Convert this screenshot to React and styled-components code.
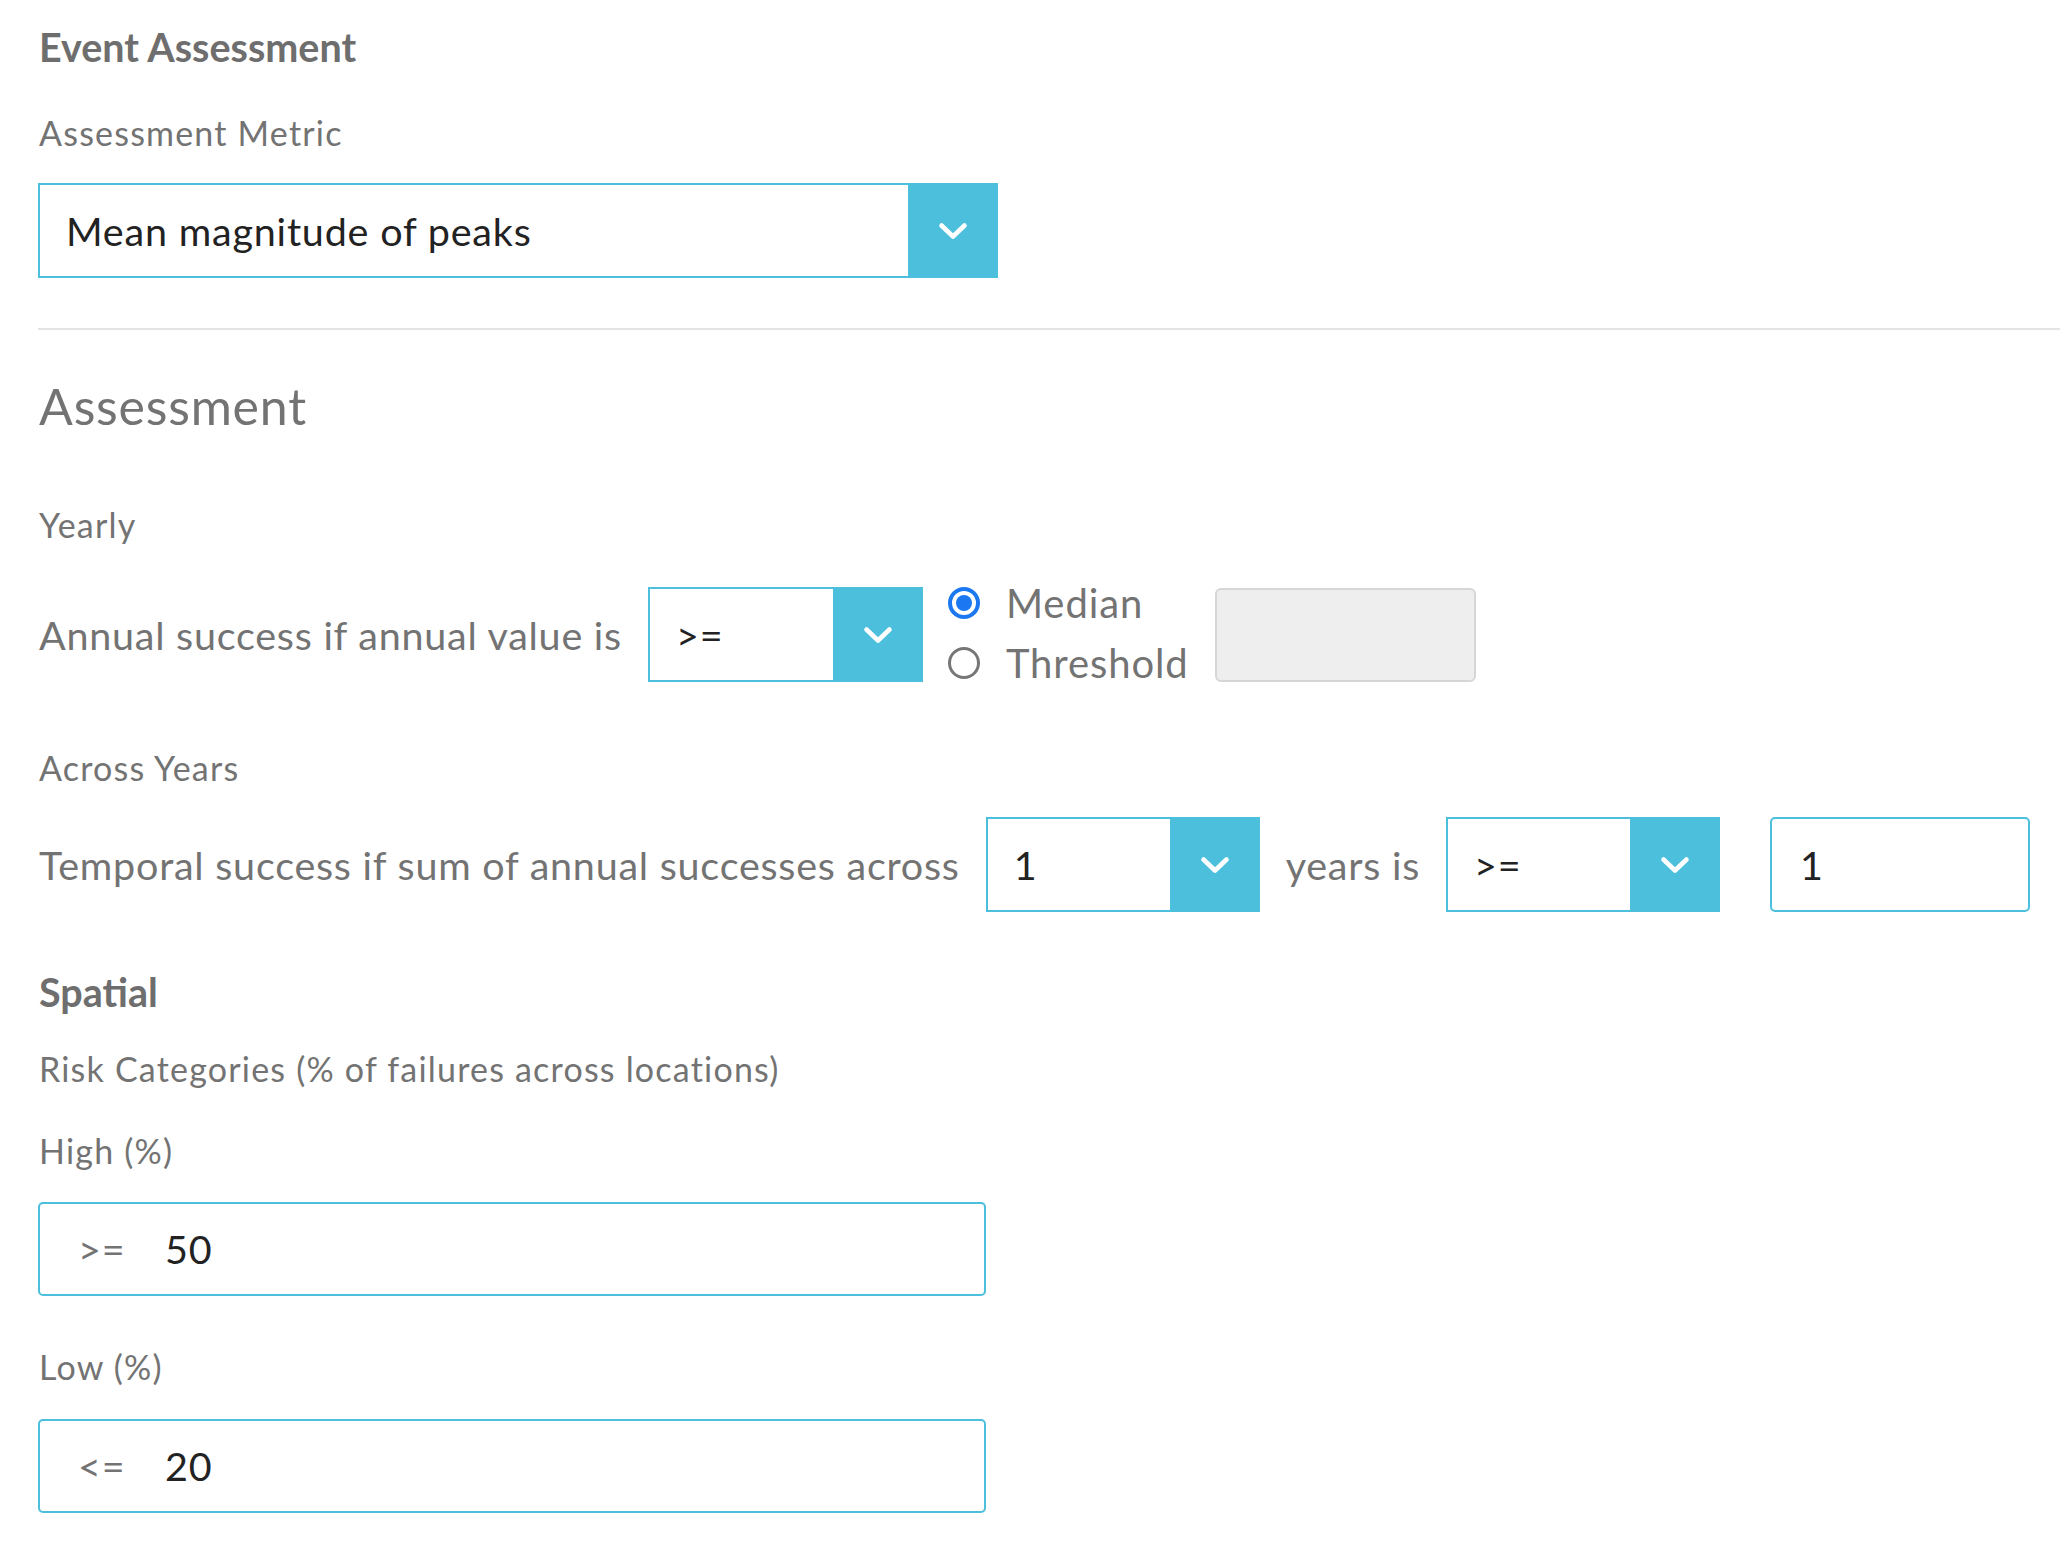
import React from "react";
import styled, { createGlobalStyle } from "styled-components";

const BLUE = "#4cbfdc";
const GRAY = "#737373";
const DARK = "#222222";

const Global = createGlobalStyle`
  html, body { margin: 0; padding: 0; background: #ffffff; }
  body { font-family: Lato, "Open Sans", "Liberation Sans", sans-serif; color: ${GRAY}; }
  * { box-sizing: border-box; }
`;

const Page = styled.div`
  width: 2060px;
  padding: 23px 0 40px 38px;
  display: flex;
  flex-direction: column;
  align-items: flex-start;
`;

const Title = styled.div`
  margin-top: ${(p) => p.$mt || 0}px;
  font-size: 39.5px;
  line-height: 48px;
  font-weight: 700;
  color: #6e6e6e;
  padding-left: 1px;
`;

const Heading = styled.h2`
  margin: 46px 0 0;
  font-size: 50px;
  line-height: 60px;
  font-weight: 400;
  letter-spacing: 0.8px;
  color: ${GRAY};
  padding-left: 1px;
`;

const Label = styled.div`
  margin-top: ${(p) => p.$mt || 0}px;
  font-size: 34px;
  line-height: 41px;
  letter-spacing: 1.2px;
  color: ${GRAY};
  padding-left: 1px;
`;

const Divider = styled.hr`
  align-self: stretch;
  margin: 50px 0 0;
  border: none;
  height: 2px;
  background: #e4e4e4;
`;

const Row = styled.div`
  margin-top: ${(p) => p.$mt || 0}px;
  display: flex;
  align-items: center;
  gap: 26px;
  height: 95px;
`;

const RowText = styled.span`
  font-size: 39.5px;
  line-height: 48px;
  letter-spacing: 0.75px;
  color: ${GRAY};
  white-space: nowrap;
  padding-left: ${(p) => (p.$first ? 1 : 0)}px;
`;

const SelectBox = styled.div`
  margin-top: ${(p) => p.$mt || 0}px;
  width: ${(p) => p.$w}px;
  height: 95px;
  border: 2px solid ${BLUE};
  display: flex;
  align-items: stretch;
  background: #ffffff;
  flex: none;
`;

const SelectValue = styled.div`
  flex: 1;
  display: flex;
  align-items: center;
  padding-left: 26px;
  font-size: 39.5px;
  line-height: 48px;
  letter-spacing: 0.8px;
  color: ${DARK};
  white-space: nowrap;
`;

const SelectButton = styled.div`
  width: 90px;
  margin: -2px -2px -2px 0;
  background: ${BLUE};
  display: flex;
  align-items: center;
  justify-content: center;
`;

const Chevron = () => (
  <svg width="30" height="18" viewBox="0 0 30 18" fill="none">
    <polyline
      points="3.5,3.5 15,14.5 26.5,3.5"
      stroke="#ffffff"
      strokeWidth="4.6"
      strokeLinecap="round"
      strokeLinejoin="round"
    />
  </svg>
);

const Select = ({ value, w, mt }) => (
  <SelectBox $w={w} $mt={mt}>
    <SelectValue>{value}</SelectValue>
    <SelectButton>
      <Chevron />
    </SelectButton>
  </SelectBox>
);

const RadioGroup = styled.div`
  align-self: flex-start;
  display: flex;
  flex-direction: column;
  gap: 28px;
  margin-left: -1px;
`;

const RadioRow = styled.label`
  display: flex;
  align-items: center;
  gap: 26px;
  height: 32px;
  font-size: 40px;
  line-height: 32px;
  letter-spacing: 0.9px;
  color: ${GRAY};
  white-space: nowrap;
`;

const RadioDot = styled.span`
  width: 32px;
  height: 32px;
  border-radius: 50%;
  flex: none;
  background: #ffffff;
  border: ${(p) => (p.$on ? "4px solid #1b78f2" : "3px solid #767676")};
  display: flex;
  align-items: center;
  justify-content: center;
  &::after {
    content: "";
    display: ${(p) => (p.$on ? "block" : "none")};
    width: 16px;
    height: 16px;
    border-radius: 50%;
    background: #1b78f2;
  }
`;

const DisabledBox = styled.div`
  width: 261px;
  height: 94px;
  background: #eeeeee;
  border: 2px solid #d6d6d6;
  border-radius: 6px;
  flex: none;
`;

const ValueInput = styled.div`
  margin-top: ${(p) => p.$mt || 0}px;
  margin-left: ${(p) => p.$ml || 0}px;
  width: ${(p) => p.$w}px;
  height: ${(p) => p.$h || 95}px;
  border: 2px solid ${BLUE};
  border-radius: 5px;
  display: flex;
  align-items: center;
  padding-left: ${(p) => p.$pl || 28}px;
  font-size: 39.5px;
  line-height: 48px;
  letter-spacing: 0.8px;
  color: ${DARK};
  flex: none;
`;

const Prefix = styled.span`
  font-size: 39.5px;
  line-height: 48px;
  letter-spacing: 0.75px;
  color: ${GRAY};
  width: 87px;
  flex: none;
`;

export default function App() {
  return (
    <>
      <Global />
      <Page>
        <Title>Event Assessment</Title>
        <Label $mt={41}>Assessment Metric</Label>
        <Select value="Mean magnitude of peaks" w={960} mt={30} />
        <Divider />
        <Heading>Assessment</Heading>
        <Label $mt={68}>Yearly</Label>
        <Row $mt={42}>
          <RowText $first>Annual success if annual value is</RowText>
          <Select value=">=" w={275} />
          <RadioGroup>
            <RadioRow>
              <RadioDot $on />
              Median
            </RadioRow>
            <RadioRow>
              <RadioDot />
              Threshold
            </RadioRow>
          </RadioGroup>
          <DisabledBox />
        </Row>
        <Label $mt={65}>Across Years</Label>
        <Row $mt={29}>
          <RowText $first>Temporal success if sum of annual successes across</RowText>
          <Select value="1" w={274} />
          <RowText>years is</RowText>
          <Select value=">=" w={274} />
          <ValueInput $w={260} $ml={24}>1</ValueInput>
        </Row>
        <Title $mt={56}>Spatial</Title>
        <Label $mt={32}>Risk Categories (% of failures across locations)</Label>
        <Label $mt={41}>High (%)</Label>
        <ValueInput $mt={31} $w={948} $h={94} $pl={38}>
          <Prefix>&gt;=</Prefix>50
        </ValueInput>
        <Label $mt={50}>Low (%)</Label>
        <ValueInput $mt={32} $w={948} $h={94} $pl={38}>
          <Prefix>&lt;=</Prefix>20
        </ValueInput>
      </Page>
    </>
  );
}
